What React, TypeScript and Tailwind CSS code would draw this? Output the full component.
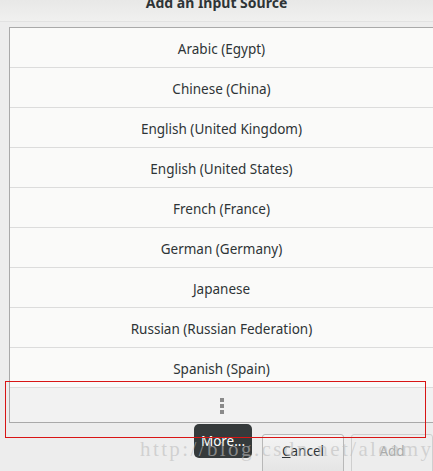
const LANGS = [
  "Arabic (Egypt)",
  "Chinese (China)",
  "English (United Kingdom)",
  "English (United States)",
  "French (France)",
  "German (Germany)",
  "Japanese",
  "Russian (Russian Federation)",
  "Spanish (Spain)",
];

export default function App() {
  return (
    <div className="relative w-[433px] h-[471px] overflow-hidden bg-[#ededed] text-[#2e3436] font-['Noto_Sans',sans-serif]">
      {/* header */}
      <div className="h-[22px] bg-gradient-to-b from-[#e8e8e7] to-[#f0f0ef] border-b border-[#e2e2e2] flex items-end justify-center">
        <span className="text-[14px] font-bold leading-none relative -top-[11px] text-[#2e3436]">
          Add an Input Source
        </span>
      </div>

      {/* list */}
      <div className="ml-[9px] mt-[5px] w-[440px] border-l border-t border-b border-[#a9a9a9] bg-[#fafaf9]">
        {LANGS.map((l) => (
          <div
            key={l}
            className="h-[40px] flex items-center justify-center border-b border-[#dcdcdc] text-[13.5px]"
          >
            <span className="-ml-[16px] mt-[3px]">{l}</span>
          </div>
        ))}
        <div className="h-[34px] bg-[#f2f2f2] flex items-center justify-center">
          <div className="flex flex-col gap-[2px] -ml-[16px] mt-[2px]">
            <div className="w-[4px] h-[4px] bg-[#8a8a8a]" />
            <div className="w-[4px] h-[4px] bg-[#8a8a8a]" />
            <div className="w-[4px] h-[4px] bg-[#8a8a8a]" />
          </div>
        </div>
      </div>

      {/* buttons */}
      <div className="flex gap-[7px] ml-[262px] mt-[11px]">
        <div className="w-[84px] h-[40px] rounded-[3px] border border-[#b8b8b8] bg-gradient-to-b from-[#f4f4f4] to-[#e4e4e4] flex items-center justify-center text-[13.5px]">
          <span className="-mt-[5px]"><span className="underline">C</span>ancel</span>
        </div>
        <div className="w-[84px] h-[40px] rounded-[3px] border border-[#cfcfcf] bg-[#ededed] flex items-center justify-center text-[13.5px] text-[#a8aaa9]">
          <span className="-mt-[5px]">Add</span>
        </div>
      </div>

      {/* tooltip */}
      <div className="absolute left-[194px] top-[424px] w-[58px] h-[34px] rounded-[5px] bg-[#353a3b] text-white text-[13.5px] flex items-center justify-center">
        <span className="mt-[1px]">More...</span>
      </div>

      {/* red annotation box */}
      <div className="absolute left-[5px] top-[381px] w-[421px] h-[57px] border border-[#d81515] pointer-events-none" />

      {/* watermark */}
      <div className="absolute left-[140px] top-[439px] text-[21px] leading-none tracking-[2.4px] text-[#bdbdbd]/60 font-['Liberation_Serif',serif] whitespace-nowrap pointer-events-none">
        http://blog.csdn.net/aleamy
      </div>
    </div>
  );
}
